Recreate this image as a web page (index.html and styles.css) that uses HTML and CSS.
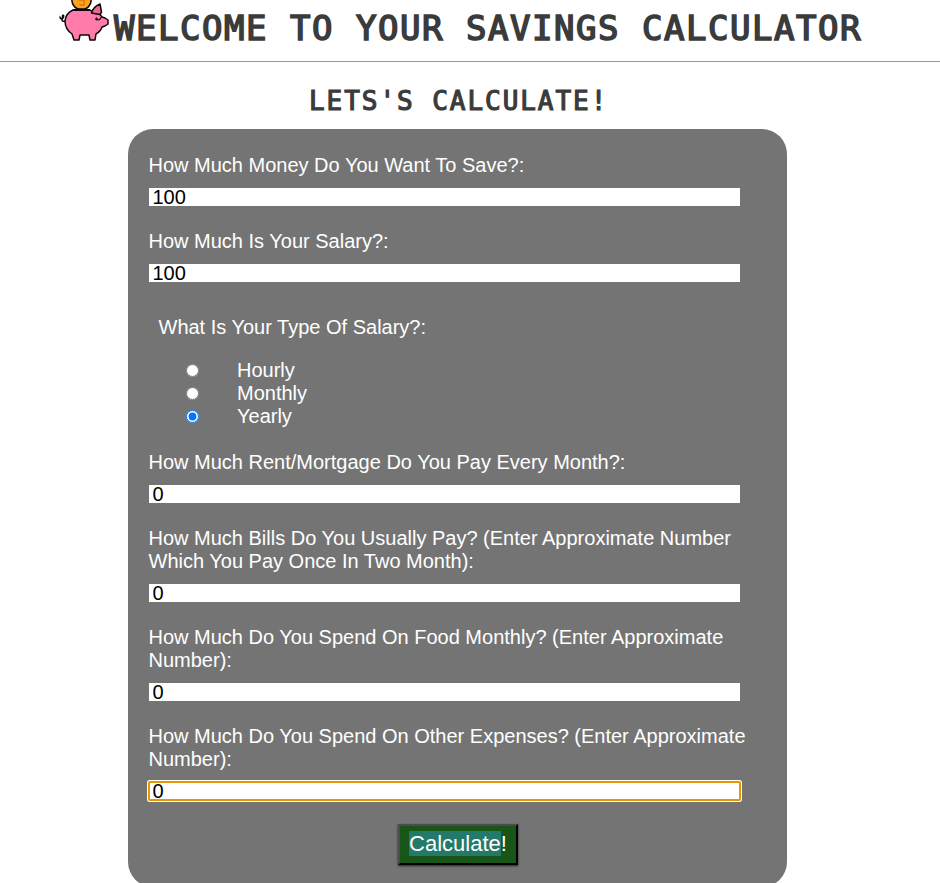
FILE: index.html
```html
<!DOCTYPE html>
<html lang="en">
<head>
<meta charset="utf-8">
<title>Savings Calculator</title>
<link rel="stylesheet" href="styles.css">
</head>
<body>
<header class="header">
  <svg class="pig" viewBox="0 0 50 42" aria-hidden="true">
    <g stroke="#0c080b" stroke-width="1.5" stroke-linejoin="round" stroke-linecap="round">
      <circle cx="22.5" cy="0" r="9.7" fill="#fba31b"/>
      <path d="M20 0h5v5h-4" fill="none" stroke="#d77719"/>
      <path d="M6 21C3 22 2 20 4 18C6 15 3 14 3.500 17C3 20 1 19 1 17" fill="none"/>
      <path d="M14 10Q22 8 31 10L34 12Q40 12 43 17L46 18L49 20V24L46 26L43 27Q42 31 37 34L36 40H31L30 35H21L20 40H15L13 34Q6 29 6 21Q7 13 14 10Z" fill="#ff7bac"/>
      <path d="M32.500 13Q34 7 41 4L42.500 12L41 14.500Z" fill="#ef659a"/>
      <path d="M37.500 18Q40 22 42 17.500M38 20L36.500 19" fill="none" stroke-width="1.200"/>
      <path d="M15 10H30" fill="none" stroke-width="2"/>
    </g>
  </svg>
  <h1 class="title">WELCOME TO YOUR SAVINGS CALCULATOR</h1>
</header>
<main class="main">
  <h2 class="subtitle">LETS'S CALCULATE!</h2>
  <form class="form">
    <label class="field">How Much Money Do You Want To Save?:<input class="input" value="100"></label>
    <label class="field">How Much Is Your Salary?:<input class="input" value="100"></label>
    <fieldset class="salary">
      <legend class="legend">What Is Your Type Of Salary?:</legend>
      <label class="option"><input class="radio" type="radio" name="type">Hourly</label>
      <label class="option"><input class="radio" type="radio" name="type">Monthly</label>
      <label class="option"><input class="radio" type="radio" name="type" checked>Yearly</label>
    </fieldset>
    <label class="field">How Much Rent/Mortgage Do You Pay Every Month?:<input class="input" value="0"></label>
    <label class="field">How Much Bills Do You Usually Pay? (Enter Approximate Number Which You Pay Once In Two Month):<input class="input" value="0"></label>
    <label class="field">How Much Do You Spend On Food Monthly? (Enter Approximate Number):<input class="input" value="0"></label>
    <label class="field">How Much Do You Spend On Other Expenses? (Enter Approximate Number):<input class="input input-active" value="0"></label>
    <button class="button" type="button"><span class="selected">Calculate</span>!</button>
  </form>
</main>
</body>
</html>
```
FILE: styles.css
```css
* { box-sizing: border-box; }
body {
  margin: 0;
  height: 883px;
  overflow: hidden;
  background: #fff;
  font-family: "Liberation Sans", Arial, sans-serif;
}
.header {
  display: flex;
  height: 62px;
  padding-left: 59px;
  border-bottom: 1px solid #999;
}
.pig { width: 50px; height: 42px; flex: none; }
.title, .subtitle {
  margin: 0;
  color: #3b3b3b;
  font-family: "DejaVu Sans Mono", monospace;
  font-weight: 400;
  white-space: nowrap;
}
.title {
  margin-left: 5px;
  padding-top: 7px;
  font-size: 34px;
  line-height: 42px;
  letter-spacing: 1.53px;
  -webkit-text-stroke: 1.6px #3b3b3b;
}
.subtitle {
  height: 67px;
  padding: 22px 0 0 309px;
  font-size: 26px;
  line-height: 34px;
  letter-spacing: 1.95px;
  -webkit-text-stroke: 1.2px #3b3b3b;
}
.form {
  width: 659px;
  height: 758px;
  margin-left: 128px;
  padding: 25px 20px 0 20.5px;
  border-radius: 25px;
  background: #747474;
  color: #fff;
  font-size: 20px;
  line-height: 23px;
}
.field { display: block; width: 606px; margin-bottom: 24px; }
.input {
  display: block;
  width: 591px;
  height: 18px;
  margin-top: 11px;
  padding: 0 0 0 4px;
  border: 0;
  background: #fff;
  color: #000;
  font: 20px/18px "Liberation Sans", Arial, sans-serif;
}
.input-active {
  border-radius: 1px;
  outline: 2px solid #e59700;
  outline-offset: -1px;
  box-shadow: 0 0 0 2px #fff;
}
.salary { margin: 34px 0 23px; padding: 0; border: 0; }
.legend { margin-bottom: 20px; padding: 0 0 0 10px; }
.option { display: flex; align-items: center; height: 23px; padding-left: 37.5px; }
.radio { width: 13px; height: 13px; margin: 0 38px 0 0; }
.button {
  display: block;
  width: 120px;
  height: 41px;
  margin: 24px 0 0 249.5px;
  padding: 0 0 2px;
  border: 2px outset #000;
  border-color: #4c4c4c #000 #000 #4c4c4c;
  background: #195419;
  box-shadow: 0 1px 2px #222;
  color: #fff;
  font: 22px/26px "Liberation Sans", Arial, sans-serif;
}
.selected { background: #23796a; }
```
